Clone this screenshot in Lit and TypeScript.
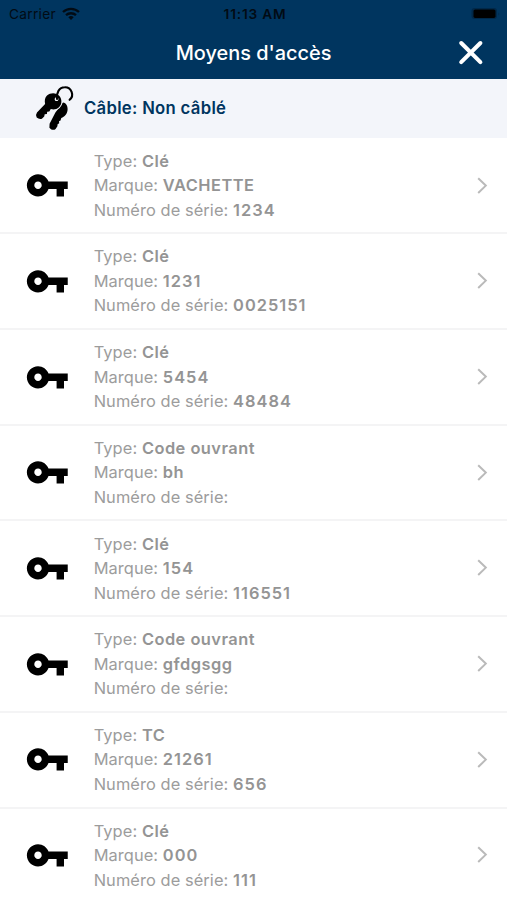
import { LitElement, html, css, nothing } from "lit";
import { customElement, property } from "lit/decorators.js";
import { classMap } from "lit/directives/class-map.js";

interface Access {
  type: string;
  brand: string;
  serial: string;
}

const ITEMS: Access[] = [
  { type: "Clé", brand: "VACHETTE", serial: "1234" },
  { type: "Clé", brand: "1231", serial: "0025151" },
  { type: "Clé", brand: "5454", serial: "48484" },
  { type: "Code ouvrant", brand: "bh", serial: "" },
  { type: "Clé", brand: "154", serial: "116551" },
  { type: "Code ouvrant", brand: "gfdgsgg", serial: "" },
  { type: "TC", brand: "21261", serial: "656" },
  { type: "Clé", brand: "000", serial: "111" },
];

@customElement("access-row")
class AccessRow extends LitElement {
  @property({ attribute: false }) item!: Access;

  static styles = css`
    :host {
      display: flex;
      align-items: center;
      box-sizing: border-box;
      height: 95.7px;
      padding: 0 18px 0 25px;
      border-bottom: 2px solid #f4f4f5;
      background: #fff;
    }
    .key {
      flex: none;
      width: 44.6px;
      height: 44.6px;
    }
    .lines {
      flex: 1;
      margin-left: 24.1px;
      font-size: 16.4px;
      line-height: 24.5px;
      letter-spacing: 0.08px;
      color: #9c9c9c;
      white-space: nowrap;
    }
    .value {
      font-weight: 600;
      color: #949494;
      letter-spacing: 0.48px;
    }
    .number {
      letter-spacing: 1.02px;
    }
    .chevron {
      flex: none;
      width: 14px;
      height: 20px;
    }
  `;

  private line(label: string, value: string) {
    const classes = { value: true, number: /^\d+$/.test(value) };
    return html`<div>${label}: ${value ? html`<span class=${classMap(classes)}>${value}</span>` : nothing}</div>`;
  }

  render() {
    return html`
      <svg class="key" viewBox="0 0 24 24">
        <path d="M12.65 10C11.83 7.67 9.61 6 7 6c-3.31 0-6 2.69-6 6s2.69 6 6 6c2.61 0 4.83-1.67 5.65-4H17v4h4v-4h2v-4H12.65zM7 14c-1.1 0-2-.9-2-2s.9-2 2-2 2 .9 2 2-.9 2-2 2z" />
      </svg>
      <div class="lines">
        ${this.line("Type", this.item.type)}
        ${this.line("Marque", this.item.brand)}
        ${this.line("Numéro de série", this.item.serial)}
      </div>
      <svg class="chevron" viewBox="0 0 14 20" fill="none" stroke="#bababa" stroke-width="2">
        <path d="M3.2 2.2 10.8 9.6 3.2 17" />
      </svg>
    `;
  }
}

@customElement("app-root")
class AppRoot extends LitElement {
  static styles = css`
    :host {
      display: block;
      height: 900px;
      overflow: hidden;
      background: #fff;
      font-family: Inter, "Liberation Sans", sans-serif;
    }
    .top {
      height: 79px;
      background: #00355f;
    }
    .status {
      display: grid;
      grid-template-columns: 1fr auto 1fr;
      align-items: center;
      height: 27px;
      padding: 0 6px 0 9px;
      font-size: 13.7px;
      color: #020b14;
    }
    .carrier {
      display: flex;
      align-items: center;
      gap: 6px;
      letter-spacing: 0.3px;
    }
    .wifi {
      width: 18px;
      height: 13px;
    }
    .time {
      font-weight: 600;
      letter-spacing: 0.8px;
    }
    .battery {
      justify-self: end;
      width: 31px;
      height: 14px;
    }
    .bar {
      display: grid;
      grid-template-columns: 1fr auto 1fr;
      align-items: center;
      height: 51px;
      padding: 0 23px;
    }
    .title {
      grid-column: 2;
      color: #fff;
      font-size: 19.9px;
      font-weight: 550;
      white-space: nowrap;
    }
    .close {
      justify-self: end;
      width: 26px;
      height: 26px;
    }
    .cable {
      display: flex;
      align-items: center;
      height: 58.7px;
      box-sizing: border-box;
      padding-left: 34px;
      background: #f3f5fa;
      color: #00355f;
      font-size: 16.7px;
      font-weight: 600;
      letter-spacing: 0.3px;
    }
    .keys {
      width: 42px;
      height: 46px;
      margin-right: 8px;
      overflow: visible;
    }
    main {
      padding-top: 1px;
    }
  `;

  render() {
    return html`
      <header class="top">
        <div class="status">
          <div class="carrier">
            <span>Carrier</span>
            <svg class="wifi" viewBox="0 0 18 13">
              <g fill="none" stroke="#020b14" stroke-width="2.3">
                <path d="M1 5a11.6 11.6 0 0 1 16 0" />
                <path d="M4 8.2a7.4 7.4 0 0 1 10 0" />
              </g>
              <path d="M9 13 6.3 10.2a4 4 0 0 1 5.4 0z" fill="#020b14" />
            </svg>
          </div>
          <span class="time">11:13 AM</span>
          <svg class="battery" viewBox="0 0 31 14">
            <rect x="1.5" y="1" width="25.5" height="11" rx="3" fill="#002849" />
            <rect x="3.5" y="2.4" width="22" height="8.5" rx="1.6" fill="#000" />
            <path d="M28.5 5.2q1.6 1.8 0 3.6z" fill="#002849" />
          </svg>
        </div>
        <div class="bar">
          <span class="title">Moyens d'accès</span>
          <svg class="close" viewBox="0 0 26 26" stroke="#fff" stroke-width="4" stroke-linecap="round">
            <path d="M3.2 3 22.4 22.200M22.4 3 3.2 22.200" />
          </svg>
        </div>
      </header>
      <section class="cable">
        <svg class="keys" viewBox="0 0 42 46">
          <path d="M29 17.500c3.200.6 4.900 3.500 4.600 7.300-.4 4.200-3 7-6.300 8.200l-.8 2.500-1.500.8.200 2-1.600 1-.2 2-1.800 2.700q-1.700 1.500-4.300.4l-1.900-1.600.2-4 5.800-11.300z" />
          <path fill-rule="evenodd" stroke="#f3f5fa" stroke-width="2" paint-order="stroke" d="M13 10.500c3.700-3.200 9.200-3 12.200.3 3 3.300 3 8.500-.2 11.500-2.500 2.300-5.500 2.600-8.200 1.800l-1.500 2.400-2.100.2-.3 2.200-2.200.3-.5 2.200-2.300 2.400q-2.800.9-5.200-1.200l-.7-2.500 1-2.500 8.100-8.600c-.7-3.300-.3-6.300 1.900-8.500zM22.500 12.300a1.900 1.900 0 1 0 .1 0z" />
          <path d="M23 14C22.300 8 25 2.300 30.700 2.300A7.100 7.100 0 0 1 35.600 14.800" fill="none" stroke="#000" stroke-width="2.100" stroke-linecap="round" />
        </svg>
        <span>Câble: Non câblé</span>
      </section>
      <main>${ITEMS.map((item) => html`<access-row .item=${item}></access-row>`)}</main>
    `;
  }
}
